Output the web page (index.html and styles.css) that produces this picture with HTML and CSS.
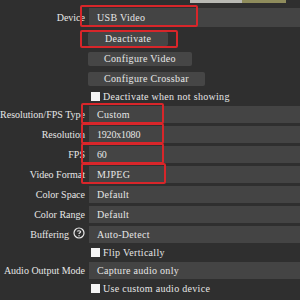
FILE: index.html
```html
<!DOCTYPE html>
<html lang="en">
<head>
    <meta charset="UTF-8">
    <title>Video Capture Device Properties</title>
    <link rel="stylesheet" href="styles.css">
</head>
<body>
    <div class="preview-edge">
        <span class="edge-light"></span>
        <span class="edge-yellow"></span>
    </div>

    <div class="props">
        <!-- 设备 -->
        <div class="label row-device">Device</div>
        <div class="control row-device">
            <div class="combo">USB Video</div>
            <span class="mark mark-device"></span>
        </div>

        <div class="label row-btn"></div>
        <div class="control row-btn">
            <button class="btn btn-deactivate">Deactivate</button>
            <span class="mark mark-deactivate"></span>
        </div>

        <div class="label row-btn"></div>
        <div class="control row-btn">
            <button class="btn">Configure Video</button>
        </div>

        <div class="label row-btn"></div>
        <div class="control row-btn">
            <button class="btn">Configure Crossbar</button>
        </div>

        <div class="label row-check"></div>
        <div class="control row-check">
            <label class="check"><span class="box"></span>Deactivate when not showing</label>
        </div>

        <!-- 分辨率 -->
        <div class="label">Resolution/FPS Type</div>
        <div class="control">
            <div class="combo">Custom</div>
            <span class="mark mark-field"></span>
        </div>

        <div class="label">Resolution</div>
        <div class="control">
            <div class="combo num">1920x1080</div>
            <span class="mark mark-field"></span>
        </div>

        <div class="label">FPS</div>
        <div class="control">
            <div class="combo num">60</div>
            <span class="mark mark-field"></span>
        </div>

        <div class="label">Video Format</div>
        <div class="control">
            <div class="combo">MJPEG</div>
            <span class="mark mark-field mark-wide"></span>
        </div>

        <div class="label">Color Space</div>
        <div class="control">
            <div class="combo">Default</div>
        </div>

        <div class="label">Color Range</div>
        <div class="control">
            <div class="combo">Default</div>
        </div>

        <div class="label label-help">Buffering
            <svg class="help" width="12" height="12" viewBox="0 0 12 12">
                <circle cx="6" cy="6" r="5" fill="none" stroke="#e8e8e8" stroke-width="1.2"/>
                <path d="M4.3 4.6 C4.3 3.4 7.7 3.4 7.7 4.7 C7.7 5.7 6 5.8 6 7" fill="none" stroke="#e8e8e8" stroke-width="1.1"/>
                <circle cx="6" cy="8.7" r="0.7" fill="#e8e8e8"/>
            </svg>
        </div>
        <div class="control">
            <div class="combo">Auto-Detect</div>
        </div>

        <div class="label row-check"></div>
        <div class="control row-check">
            <label class="check"><span class="box"></span>Flip Vertically</label>
        </div>

        <div class="label">Audio Output Mode</div>
        <div class="control">
            <div class="combo">Capture audio only</div>
        </div>

        <div class="label row-check"></div>
        <div class="control row-check">
            <label class="check"><span class="box"></span>Use custom audio device</label>
        </div>
    </div>
</body>
</html>
```

FILE: styles.css
```css
/* 属性面板 */
body {
    margin: 0;
    width: 300px;
    height: 300px;
    overflow: hidden;
    background-color: #2f2f2f;
    font-family: 'Liberation Serif', serif;
    font-size: 10px;
    letter-spacing: 0.3px;
    color: #e6e6e6;
}
.preview-edge {
    display: flex;
    height: 3px;
    padding-left: 190px;
}
.edge-light {
    width: 52px;
    background-color: #b9b9b4;
}
.edge-yellow {
    width: 44px;
    background-color: #8f8c5c;
}
.props {
    display: grid;
    grid-template-columns: 85px 1fr;
    column-gap: 4px;
    row-gap: 3px;
    padding-top: 5px;
}
.label, .control {
    height: 17px;
    display: flex;
    align-items: center;
}
.label {
    justify-content: flex-end;
    white-space: nowrap;
    letter-spacing: 0;
}
.control {
    position: relative;
}
.row-device {
    height: 19px;
}
.row-check.label, .row-check.control {
    height: 13px;
}
.combo {
    flex: 1;
    height: 100%;
    background-color: #444444;
    padding-left: 8px;
    display: flex;
    align-items: center;
    white-space: nowrap;
}
.num {
    letter-spacing: -0.2px;
}
.btn {
    height: 14px;
    padding: 0 16px;
    margin-left: -1px;
    background-color: #464646;
    color: #e6e6e6;
    border: none;
    border-radius: 2px;
    font-family: inherit;
    font-size: 10px;
    letter-spacing: 0.35px;
    white-space: nowrap;
}
.btn-deactivate {
    padding: 0 17px;
}
.check {
    display: flex;
    align-items: center;
    white-space: nowrap;
    margin-left: 2px;
    letter-spacing: 0.3px;
}
.box {
    width: 9px;
    height: 9px;
    background-color: #f4f4f4;
    margin-right: 3px;
}
.label-help {
    gap: 4px;
}
.help {
    flex: none;
    margin-top: -4px;
}
/* 红框标注 */
.mark {
    position: absolute;
    border: 2px solid #d8262a;
    border-radius: 2px;
    box-sizing: border-box;
}
.mark-device {
    left: -9px;
    top: -3px;
    width: 118px;
    height: 22px;
}
.mark-deactivate {
    left: -9px;
    top: 0;
    width: 98px;
    height: 18px;
}
.mark-field {
    left: -8px;
    top: -3px;
    width: 83px;
    height: 21px;
}
.mark-wide {
    width: 85px;
}
```
